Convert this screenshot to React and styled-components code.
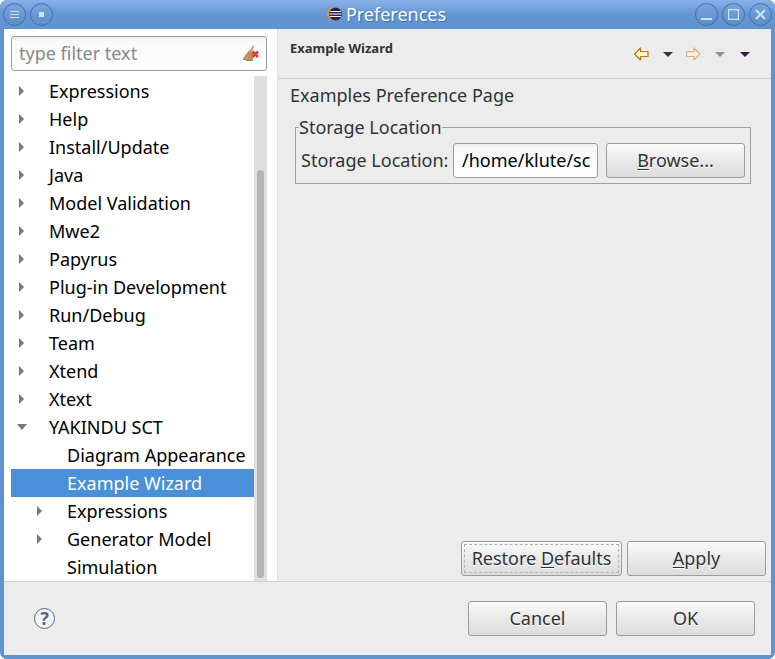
import React, { useState } from "react";
import styled, { createGlobalStyle, css } from "styled-components";

const GlobalStyle = createGlobalStyle`
  *, *::before, *::after { box-sizing: border-box; }
  body { margin: 0; background: #ffffff; }
  body, button, input { font-family: "Noto Sans", sans-serif; font-size: 18px; }
`;

const Window = styled.div`
  display: grid;
  grid-template-columns: minmax(0, 1fr);
  grid-template-rows: 29px 1fr auto;
  min-height: 100vh;
  border-radius: 7px;
  overflow: hidden;
  background: #6093cf;
  color: #2e3436;
`;

const TitleBar = styled.header`
  display: grid;
  grid-template-columns: 1fr auto 1fr;
  align-items: center;
  padding: 0 3px;
  background: linear-gradient(#88b2e8, #6296d3 50%, #6093cf);
`;

const TitleButtons = styled.div`
  display: flex;
  gap: 4px;
  justify-content: ${(p) => (p.$end ? "flex-end" : "flex-start")};
`;

const TitleButton = styled.button`
  display: grid;
  place-items: center;
  width: 23px;
  height: 23px;
  padding: 0;
  border: 1px solid #42719f;
  border-radius: 50%;
  background: linear-gradient(#78a4dc, #5b8ecb);
  color: #cfe0f5;
`;

const Title = styled.h1`
  display: flex;
  align-items: center;
  gap: 4px;
  margin: 0;
  padding: 0 2px 2px 0;
  font-size: 18px;
  font-weight: 400;
  line-height: 26px;
  color: #ffffff;
  text-shadow: 1px 1px 1px #3f6ea8;
`;

const Body = styled.main`
  display: grid;
  grid-template-columns: 273px minmax(0, 1fr);
  margin: 0 4px;
  background: #ececec;
`;

const Sidebar = styled.nav`
  display: flex;
  flex-direction: column;
  gap: 5px;
  padding: 7px 10px 0 7px;
  background: #ffffff;
`;

const fieldBox = css`
  height: 35px;
  border: 1px solid #9c9c9c;
  border-radius: 3px;
  background: linear-gradient(#eeeeee, #f9f9f9 5px, #ffffff);
`;

const SearchBox = styled.label`
  ${fieldBox}
  display: flex;
  align-items: center;
  padding: 0 7px 1px;
`;

const SearchInput = styled.input`
  flex: 1;
  min-width: 0;
  padding: 0;
  border: 0;
  outline: 0;
  background: transparent;
  &::placeholder { color: #888888; opacity: 1; }
`;

const ClearButton = styled.button`
  display: grid;
  padding: 0;
  border: 0;
  background: none;
`;

const TreeFrame = styled.div`
  display: grid;
  grid-template-columns: 1fr 13px;
  flex: 1;
`;

const Tree = styled.ul`
  margin: 0;
  padding: 1px 0 0;
  list-style: none;
`;

const TreeRow = styled.li`
  display: flex;
  align-items: center;
  height: 28px;
  padding-left: ${(p) => (p.$depth ? 24 : 6)}px;
  background: ${(p) => (p.$selected ? "#4a90d9" : "transparent")};
  color: ${(p) => (p.$selected ? "#ffffff" : "#000000")};
  white-space: nowrap;
`;

const Arrow = styled.span`
  flex: none;
  width: 32px;
  height: 10px;
  line-height: 0;
`;

const ScrollTrack = styled.div`
  display: flex;
  justify-content: center;
  padding: 94px 0 3px;
  background: #dfdfdf;
`;

const ScrollThumb = styled.div`
  width: 7px;
  border-radius: 4px;
  background: #b3b4b6;
`;

const Content = styled.section`
  display: flex;
  flex-direction: column;
  border-left: 1px solid #e2e2e2;
`;

const ContentHeader = styled.div`
  display: flex;
  justify-content: space-between;
  height: 50px;
  padding: 10px 19px 0 12px;
  border-bottom: 1px solid #d3d3d3;
`;

const PageTitle = styled.h2`
  margin: 0;
  font-size: 13px;
  line-height: 18px;
`;

const ToolBar = styled.div`
  display: flex;
  align-items: center;
  height: 30px;
  gap: 11px;
`;

const ToolButton = styled.button`
  display: grid;
  place-items: center;
  width: ${(p) => (p.$wide ? 16 : 14)}px;
  height: 16px;
  padding: 0;
  border: 0;
  background: none;
`;

const PageBody = styled.div`
  display: flex;
  flex: 1;
  flex-direction: column;
  padding: 3px 5px 5px 12px;
`;

const Description = styled.p`
  margin: 0;
  line-height: 26px;
`;

const Group = styled.fieldset`
  min-width: 0;
  margin: 6px 15px 0 5px;
  padding: 0 5px 5px;
  border: 1px solid #a0a0a0;
`;

const Legend = styled.legend`
  margin-left: -2px;
  padding: 0;
  line-height: 26px;
`;

const Field = styled.div`
  display: grid;
  grid-template-columns: 152px minmax(0, 1fr) auto;
  align-items: center;
  margin-top: 3px;
`;

const FieldLabel = styled.label`
  padding-bottom: 2px;
  white-space: nowrap;
`;

const TextInput = styled.input`
  ${fieldBox}
  min-width: 0;
  margin-right: 8px;
  padding: 0 2px 2px 8px;
  color: #000000;
`;

const Button = styled.button`
  flex: none;
  height: 35px;
  width: ${(p) => (p.$wide ? 161 : 139)}px;
  padding: 0 0 2px;
  border: 1px solid #9c9c9c;
  border-radius: 3px;
  outline: ${(p) => (p.$focused ? "1px dashed #b0b0b0" : "none")};
  outline-offset: -4px;
  background: linear-gradient(#fbfbfb, #e9e9e9 50%, #dddddd);
  color: #2e3436;
  text-shadow: 0 1px 0 #ffffff;
  white-space: nowrap;
`;

const Mnemonic = styled.span`
  text-decoration: underline;
  text-decoration-thickness: 1px;
  text-underline-offset: 2px;
`;

const PageActions = styled.div`
  display: flex;
  justify-content: flex-end;
  gap: 5px;
  margin-top: auto;
`;

const Footer = styled.footer`
  display: flex;
  align-items: center;
  justify-content: space-between;
  height: 78px;
  margin: 0 4px;
  padding: 0 16px 0 30px;
  border-top: 1px solid #d0d0d0;
  border-bottom: 4px solid #6093cf;
  background: #ececec;
`;

const FooterActions = styled.div`
  display: flex;
  gap: 9px;
`;

const HelpButton = styled.button`
  display: grid;
  place-items: center;
  width: 21px;
  height: 21px;
  padding: 0 0 2px;
  border: 1px solid #55668a;
  border-radius: 50%;
  background: #f5f5f5;
  color: #55668a;
  font-size: 18px;
  font-weight: 700;
  line-height: 18px;
`;

const EclipseLogo = () => (
  <svg width="15" height="14" viewBox="0 0 15 14" aria-hidden="true">
    <circle cx="6.5" cy="7" r="6.5" fill="#f7941e" />
    <circle cx="8.5" cy="7" r="6.5" fill="#2c2255" />
    <path d="M3 4.5H14M2.5 7H14.5M3 9.5H14" stroke="#ffffff" strokeWidth="1" />
  </svg>
);

const Broom = () => (
  <svg width="16" height="16" viewBox="0 0 16 16" aria-hidden="true">
    <path d="M10 0L11 1L9 7L7 6Z" fill="#b8966a" />
    <path d="M6.5 5L10 8V15L6 16L0 13.5L3 9Z" fill="#c39a62" />
    <path d="M6 7L3 13.5M8 7L5.5 15M9 9L8 15" stroke="#b08d5a" strokeWidth="1" />
    <path d="M0 14L6 16L10 15" fill="none" stroke="#8f7550" />
    <path d="M9.5 6.5L15 12M15 6.5L9.5 12" stroke="#e03434" strokeWidth="2.5" />
  </svg>
);

const HistoryArrow = ({ forward }) => (
  <svg width="16" height="14" viewBox="0 0 16 14" aria-hidden="true">
    <path
      d={forward ? "M14 7L8 1V4.5H.5V9.5H8V13Z" : "M.5 7L6.5 1V4.5H14V9.5H6.5V13Z"}
      fill={forward ? "#f7efdf" : "#fff8d0"}
      stroke={forward ? "#d7b27c" : "#b87514"}
      strokeWidth="1.2"
      strokeLinejoin="round"
    />
  </svg>
);

const DownArrow = ({ color }) => (
  <svg width="10" height="5" viewBox="0 0 10 5" aria-hidden="true">
    <path d="M0 0H10L5 5Z" fill={color} />
  </svg>
);

const Expander = ({ open }) => (
  <svg width="12" height="10" viewBox="0 0 12 10" aria-hidden="true">
    <path d={open ? "M0 2H10L5 8Z" : "M2 0L7 5L2 10Z"} fill="#74797a" />
  </svg>
);

const windowGlyphs = {
  Menu: "M1 2.5H10M1 5.5H10M1 8.5H10",
  Minimize: "M0 10H11",
  Maximize: "M.5 .5H10.5V10.5H.5Z",
  Close: "M1 1L10 10M10 1L1 10",
};

const WindowControl = ({ name }) => (
  <TitleButton type="button" aria-label={name}>
    <svg width="11" height="11" viewBox="0 0 11 11" aria-hidden="true">
      {name === "Pin" ? (
        <path d="M3 3H8V8H3Z" fill="currentColor" />
      ) : (
        <path
          d={windowGlyphs[name]}
          fill="none"
          stroke="currentColor"
          strokeWidth={{ Menu: 1, Minimize: 2, Maximize: 1.5, Close: 2 }[name]}
        />
      )}
    </svg>
  </TitleButton>
);

const items = [
  ...["Expressions", "Help", "Install/Update", "Java", "Model Validation", "Mwe2", "Papyrus",
    "Plug-in Development", "Run/Debug", "Team", "Xtend", "Xtext"].map((label) => ({ label, branch: true })),
  { label: "YAKINDU SCT", branch: true, open: true },
  { label: "Diagram Appearance", depth: 1 },
  { label: "Example Wizard", depth: 1 },
  { label: "Expressions", depth: 1, branch: true },
  { label: "Generator Model", depth: 1, branch: true },
  { label: "Simulation", depth: 1 },
];

export default function App() {
  const [filter, setFilter] = useState("");
  const [path, setPath] = useState("/home/klute/sc");
  const [selected, setSelected] = useState(14);

  return (
    <>
      <GlobalStyle />
      <Window>
        <TitleBar>
          <TitleButtons>
            <WindowControl name="Menu" />
            <WindowControl name="Pin" />
          </TitleButtons>
          <Title><EclipseLogo />Preferences</Title>
          <TitleButtons $end>
            <WindowControl name="Minimize" />
            <WindowControl name="Maximize" />
            <WindowControl name="Close" />
          </TitleButtons>
        </TitleBar>
        <Body>
          <Sidebar aria-label="Preference pages">
            <SearchBox>
              <SearchInput
                aria-label="Filter"
                placeholder="type filter text"
                value={filter}
                onChange={(e) => setFilter(e.target.value)}
              />
              <ClearButton type="button" aria-label="Clear" onClick={() => setFilter("")}>
                <Broom />
              </ClearButton>
            </SearchBox>
            <TreeFrame>
              <Tree role="tree">
                {items.map((item, i) => (
                  <TreeRow
                    key={i}
                    role="treeitem"
                    aria-level={item.depth ? 2 : 1}
                    aria-expanded={item.branch ? Boolean(item.open) : undefined}
                    aria-selected={selected === i}
                    $depth={item.depth}
                    $selected={selected === i}
                    onClick={() => setSelected(i)}
                  >
                    <Arrow>{item.branch && <Expander open={item.open} />}</Arrow>
                    {item.label}
                  </TreeRow>
                ))}
              </Tree>
              <ScrollTrack><ScrollThumb /></ScrollTrack>
            </TreeFrame>
          </Sidebar>
          <Content>
            <ContentHeader>
              <PageTitle>Example Wizard</PageTitle>
              <ToolBar>
                <ToolButton $wide type="button" aria-label="Back"><HistoryArrow /></ToolButton>
                <ToolButton type="button" aria-label="Back history"><DownArrow color="#2e3436" /></ToolButton>
                <ToolButton $wide type="button" aria-label="Forward" disabled><HistoryArrow forward /></ToolButton>
                <ToolButton type="button" aria-label="Forward history" disabled><DownArrow color="#8d9191" /></ToolButton>
                <ToolButton type="button" aria-label="View menu"><DownArrow color="#35194f" /></ToolButton>
              </ToolBar>
            </ContentHeader>
            <PageBody>
              <Description>Examples Preference Page</Description>
              <Group>
                <Legend>Storage Location</Legend>
                <Field>
                  <FieldLabel htmlFor="storage">Storage Location:</FieldLabel>
                  <TextInput id="storage" value={path} onChange={(e) => setPath(e.target.value)} />
                  <Button type="button"><Mnemonic>B</Mnemonic>rowse...</Button>
                </Field>
              </Group>
              <PageActions>
                <Button type="button" $wide $focused>Restore <Mnemonic>D</Mnemonic>efaults</Button>
                <Button type="button"><Mnemonic>A</Mnemonic>pply</Button>
              </PageActions>
            </PageBody>
          </Content>
        </Body>
        <Footer>
          <HelpButton type="button" aria-label="Help">?</HelpButton>
          <FooterActions>
            <Button type="button">Cancel</Button>
            <Button type="button">OK</Button>
          </FooterActions>
        </Footer>
      </Window>
    </>
  );
}
